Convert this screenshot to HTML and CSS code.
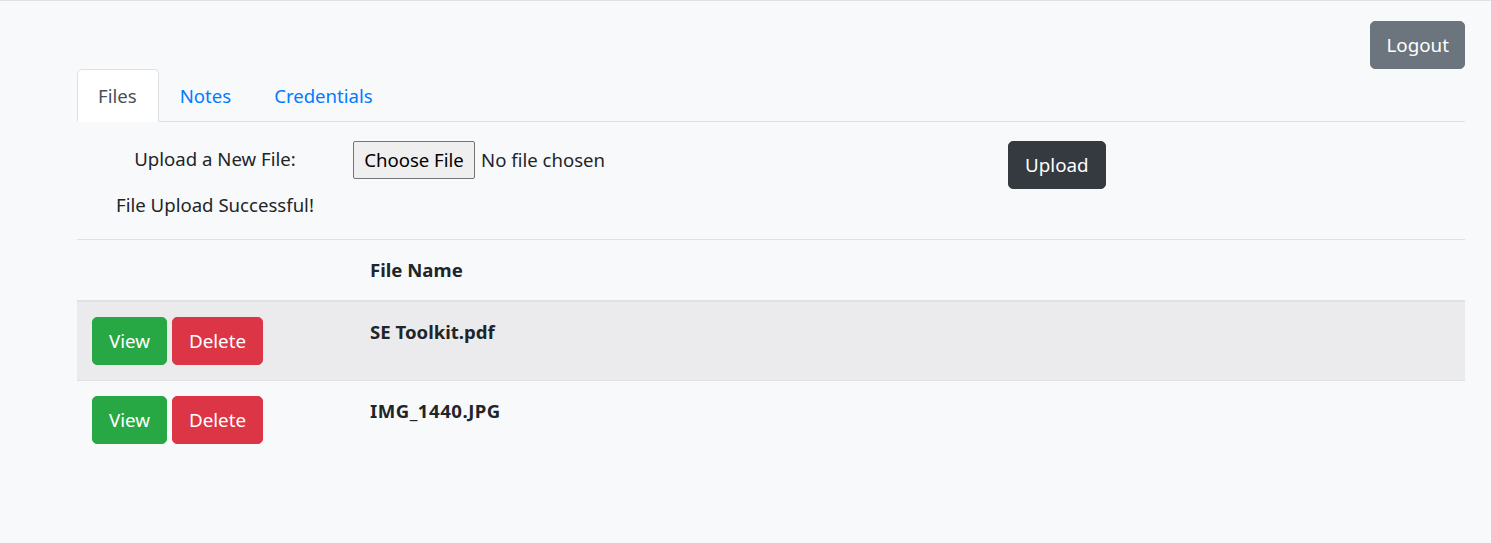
FILE: index.html
```html
<!DOCTYPE html>
<html lang="en">
<head>
<meta charset="utf-8">
<title>Home</title>
<link rel="stylesheet" href="styles.css">
</head>
<body>
<div class="page">
  <div class="logout-row">
    <button class="btn btn-secondary">Logout</button>
  </div>
  <ul class="tabs">
    <li><a class="tab active">Files</a></li>
    <li><a class="tab">Notes</a></li>
    <li><a class="tab">Credentials</a></li>
  </ul>
  <div class="upload">
    <div class="upload-label">
      <div class="label-text">Upload a New File:</div>
      <div class="success">File Upload Successful!</div>
    </div>
    <div class="file-input">
      <span class="choose">Choose File</span>
      <span class="no-file">No file chosen</span>
    </div>
    <div class="upload-btn-col">
      <button class="btn btn-dark">Upload</button>
    </div>
  </div>
  <table class="files">
    <thead>
      <tr>
        <th class="col-actions"></th>
        <th>File Name</th>
      </tr>
    </thead>
    <tbody>
      <tr class="striped">
        <td class="col-actions"><button class="btn btn-success">View</button> <button class="btn btn-danger">Delete</button></td>
        <th>SE Toolkit.pdf</th>
      </tr>
      <tr>
        <td class="col-actions"><button class="btn btn-success">View</button> <button class="btn btn-danger">Delete</button></td>
        <th class="wide">IMG_1440.JPG</th>
      </tr>
    </tbody>
  </table>
</div>
</body>
</html>
```

FILE: styles.css
```css
html, body {
  margin: 0;
  padding: 0;
}
body {
  background: #f8f9fa;
  border-top: 1px solid #dee2e6;
  font-family: "Segoe UI", "Noto Sans", "Open Sans", sans-serif;
  font-size: 18.6px;
  line-height: 30px;
  color: #212529;
  min-height: 542px;
}
.page {
  padding: 0 26px 0 77px;
}
.btn {
  font-family: inherit;
  font-size: 18.8px;
  line-height: 30px;
  padding: 8px 16px;
  border: 1px solid transparent;
  border-radius: 5px;
  color: #fff;
  cursor: pointer;
  height: 48px;
  box-sizing: border-box;
  vertical-align: middle;
}
.btn-secondary { background: #6c757d; border-color: #6c757d; padding: 8px 15px; }
.btn-dark { background: #343a40; border-color: #343a40; }
.btn-success { background: #28a745; border-color: #28a745; }
.btn-danger { background: #dc3545; border-color: #dc3545; }

.logout-row {
  display: flex;
  justify-content: flex-end;
  padding-top: 20px;
}
.tabs {
  list-style: none;
  margin: 0;
  padding: 0;
  display: flex;
  border-bottom: 1px solid #dee2e6;
}
.tab {
  display: block;
  padding: 11px 21px 10px 20px;
  border: 1px solid transparent;
  border-radius: 5px 5px 0 0;
  margin-bottom: -1px;
  color: #007bff;
}
.tab.active {
  background: #fff;
  border-color: #dee2e6 #dee2e6 #fff;
  color: #495057;
}
.upload {
  display: grid;
  grid-template-columns: 276px 655px auto;
  align-items: start;
  padding-top: 19px;
}
.upload-label {
  text-align: center;
  padding-top: 3px;
}
.success {
  margin-top: 16px;
}
.file-input {
  display: flex;
  align-items: center;
  gap: 6px;
}
.choose {
  display: inline-block;
  box-sizing: border-box;
  height: 38px;
  width: 122px;
  line-height: 36px;
  text-align: center;
  border: 1px solid #767676;
  border-radius: 2px;
  background: #efefef;
  color: #000;
}
.no-file {
  color: #212529;
}
.files {
  width: 1388px;
  margin-top: 19px;
  border-collapse: collapse;
}
.files th, .files td {
  padding: 15px;
  border-top: 1px solid #dee2e6;
  text-align: left;
  vertical-align: top;
  font-weight: 700;
}
.files thead th {
  border-bottom: 2px solid #dee2e6;
}
.files .col-actions {
  width: 248px;
}
.files tr.striped {
  background: #ebebed;
}
.files th.wide {
  letter-spacing: 0.5px;
}
```
